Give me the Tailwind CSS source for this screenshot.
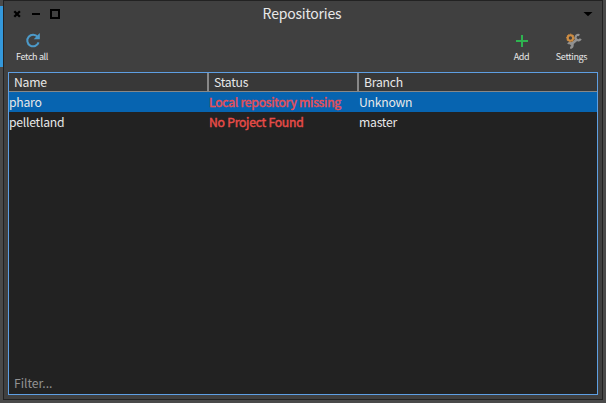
<!DOCTYPE html>
<html lang="en">
<head>
<meta charset="utf-8">
<title>Repositories</title>
<script src="https://cdn.jsdelivr.net/npm/@tailwindcss/browser@4"></script>
</head>
<body class="w-[606px] h-[403px] overflow-hidden bg-[#4a4a4a] flex font-['Noto_Sans_CJK_SC','Noto_Sans',sans-serif] text-[#e8e8e8] text-[12.2px] tracking-[-0.25px] leading-5">
  <div class="w-[3px] shrink-0 pt-[6px]"><div class="h-[61px] bg-[#3498db]"></div></div>
  <main class="w-[600px] h-[400px] shrink-0 border border-[#222222] bg-[#404040] px-1 pb-1 flex flex-col">
    <header class="h-[26px] shrink-0 grid grid-cols-[1fr_auto_1fr] items-center px-1">
      <div class="flex items-center">
        <svg width="50" height="12" viewBox="0 0 50 12" fill="none" stroke="#000" stroke-width="2"><path d="M2.3 3.2l5.6 5.6M7.9 3.2l-5.6 5.6" stroke-width="2.3"/><path d="M20 6h8"/><path d="M39 2h8v8h-8z"/></svg>
      </div>
      <h1 class="text-[14px] leading-[24px] pb-[2px] pr-[2px] tracking-[-0.2px]">Repositories</h1>
      <svg class="justify-self-end mr-[1px]" width="10" height="6" viewBox="0 0 10 6"><path d="M.5 1h9L5 5.2z"/></svg>
    </header>
    <nav class="h-[45px] shrink-0 flex text-[9px] leading-3 pt-[5px] tracking-[-0.35px]">
      <button class="w-[48px] flex flex-col items-center">
        <svg class="ml-[2px]" width="16" height="17" viewBox="0 0 16 17" fill="none"><path d="M12.7 5A5.8 5.8 0 1 0 13.6 10.4" stroke="#4c9ac9" stroke-width="2"/><path d="M14.8 1v6.2H8.7z" fill="#4c9ac9"/></svg>
        <span class="mt-[2px]">Fetch all</span>
      </button>
      <button class="ml-auto w-[40px] flex flex-col items-center">
        <svg width="16" height="17" viewBox="0 0 16 17"><path d="M8 3v12M2 9h12" stroke="#2eb350" stroke-width="2"/></svg>
        <span class="mt-[2px] pr-[1px]">Add</span>
      </button>
      <button class="ml-[10px] mr-[6px] w-[40px] flex flex-col items-center">
        <svg class="ml-[3px]" width="16" height="17" viewBox="0 0 16 17" fill="none"><path d="M4.5 13l7-6" stroke="#929292" stroke-width="2.6"/><path d="M13.4 3.2a2.7 2.7 0 1 0 1.3 3.5M2.1 12.1a2.4 2.4 0 1 1 2 3.5" stroke="#929292" stroke-width="2.2"/><circle cx="4.4" cy="6" r="3.5" fill="#404040"/><circle cx="4.4" cy="6" r="2.7" stroke="#ce8d43" stroke-width="2"/><circle cx="4.4" cy="6" r="3.9" stroke="#ce8d43" stroke-width="1" stroke-dasharray="1.5 1.4"/></svg>
        <span class="mt-[2px] pr-[1px]">Settings</span>
      </button>
    </nav>
    <section class="h-[323px] border border-[#5e9fe3] bg-[#222222] flex flex-col">
      <div class="h-[19px] shrink-0 grid grid-cols-[200px_150px_1fr] bg-[#383838] border-b border-[#888888] leading-[18px]">
        <div class="pl-[5px] border-r-2 border-[#888888]">Name</div>
        <div class="pl-[5px] border-r-2 border-[#888888]">Status</div>
        <div class="pl-[5px]">Branch</div>
      </div>
      <div class="h-5 grid grid-cols-[200px_150px_1fr] bg-[#0764b0]">
        <div>pharo</div><div class="text-[#e45058] [-webkit-text-stroke:0.45px_#e45058]">Local repository missing</div><div>Unknown</div>
      </div>
      <div class="h-5 grid grid-cols-[200px_150px_1fr]">
        <div>pelletland</div><div class="text-[#e74c48] [-webkit-text-stroke:0.45px_#e74c48]">No Project Found</div><div>master</div>
      </div>
      <div class="mt-auto h-[21px] pl-[5px] text-[#929292] tracking-[-0.05px]">Filter...</div>
    </section>
  </main>
</body>
</html>
